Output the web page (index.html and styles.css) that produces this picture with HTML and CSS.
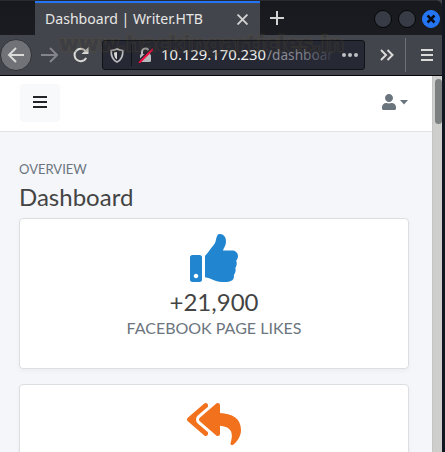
FILE: index.html
```html
<!DOCTYPE html>
<html lang="en">
<head>
<meta charset="utf-8">
<title>Dashboard | Writer.HTB</title>
<link rel="stylesheet" href="styles.css">
</head>
<body>
<div class="window">
  <header class="chrome">
    <div class="tabs">
      <div class="tab"><svg class="tab-label" width="160" height="22"><text x="0" y="15.5" textLength="158" lengthAdjust="spacingAndGlyphs">Dashboard | Writer.HTB</text></svg>
        <svg class="tab-close" width="11" height="11" viewBox="0 0 10 10"><path d="M.5.5l9 9M9.500.5l-9 9"/></svg>
      </div>
      <svg class="new-tab" width="14" height="14" viewBox="0 0 14 14"><path d="M7 0v14M0 7h14"/></svg>
      <div class="controls"><i class="dot"></i><i class="dot"></i><i class="dot close"><svg width="10" height="10" viewBox="0 0 10 10"><path d="M1.500 1.500l7 7M8.500 1.500l-7 7"/></svg></i></div>
    </div>
    <div class="toolbar">
      <span class="back"><svg width="18" height="16" viewBox="0 0 18 16"><path d="M17 8H2M9 1L2 8l7 7"/></svg></span>
      <svg class="forward" width="17" height="16" viewBox="0 0 17 16"><path d="M0 8h15M9 1l7 7-7 7"/></svg>
      <svg class="reload" width="16" height="16" viewBox="0 0 16 16"><path d="M13.2 11A6.2 6.2 0 1 1 12.5 4"/><path class="solid" d="M15.500 0v7H8.500z"/></svg>
      <div class="address">
        <svg class="shield" width="14" height="15" viewBox="0 0 14 15"><path d="M7 1C5 2 3 2.300 1.200 2.500C1 8 2.500 12 7 14C11.500 12 13 8 12.800 2.500C11 2.300 9 2 7 1z"/><path class="solid" d="M7 4L4 4.500C4 8 5 10.500 7 11.500z"/></svg>
        <span class="separator"></span>
        <svg class="lock" width="15" height="16" viewBox="0 0 15 16"><path class="shackle" d="M4 7V5a3.500 3.500 0 0 1 7 0v2"/><rect x="2" y="7" width="11" height="8" rx="1.500"/><path class="gap" d="M0 15L14 1"/><path class="slash" d="M1 16L15 2"/></svg>
        <svg class="url" width="173" height="24"><defs><linearGradient id="fade"><stop offset="0" stop-color="#92939b"/><stop offset=".5" stop-color="#858690"/><stop offset="1" stop-color="#333541"/></linearGradient></defs><text x="0" y="17" textLength="105" lengthAdjust="spacingAndGlyphs">10.129.170.230</text><text class="path" x="106" y="17" textLength="66" lengthAdjust="spacingAndGlyphs">/dashboar</text></svg>
        <span class="more"><i></i><i></i><i></i></span>
      </div>
      <svg class="overflow" width="14" height="12" viewBox="0 0 14 12"><path d="M1 1l5 5-5 5M7.500 1l5 5-5 5"/></svg>
      <span class="tool-line"></span>
      <svg class="menu" width="12" height="12" viewBox="0 0 12 12"><path d="M0 1h12M0 6h12M0 11h12"/></svg>
    </div>
    <svg class="watermark" width="290" height="28"><text x="1" y="20" textLength="285" lengthAdjust="spacingAndGlyphs">www.hackingarticles.in</text></svg>
  </header>
  <div class="viewport">
    <main class="page">
      <nav class="navbar">
        <button class="toggle" aria-label="Menu"><svg width="14" height="14" viewBox="0 0 14 14"><path d="M0 2h14M0 7h14M0 12h14"/></svg></button>
        <div class="user"><svg width="14" height="16" viewBox="0 0 448 512"><path d="M224 256c70.700 0 128-57.300 128-128S294.700 0 224 0 96 57.300 96 128s57.300 128 128 128zm89.600 32h-16.700c-22.200 10.200-46.900 16-72.900 16s-50.600-5.800-72.900-16h-16.700C60.200 288 0 348.200 0 422.400V464c0 26.500 21.500 48 48 48h352c26.500 0 48-21.500 48-48v-41.600c0-74.200-60.200-134.400-134.400-134.400z"/></svg><svg width="8" height="5" viewBox="0 0 8 5"><path d="M0 0h8L4 4.500z"/></svg></div>
      </nav>
      <section class="content">
        <div class="overview">OVERVIEW</div>
        <h1>Dashboard</h1>
        <article class="card">
          <svg class="thumb" width="48" height="48" viewBox="0 0 512 512"><path d="M104 224H24c-13.255 0-24 10.745-24 24v240c0 13.255 10.745 24 24 24h80c13.255 0 24-10.745 24-24V248c0-13.255-10.745-24-24-24zM64 472c-13.255 0-24-10.745-24-24s10.745-24 24-24 24 10.745 24 24-10.745 24-24 24zM384 81.452c0 42.416-25.970 66.208-33.277 94.548h101.723c33.397 0 59.397 27.746 59.553 58.098.084 17.938-7.546 37.249-19.439 49.197l-.110.110c9.836 23.337 8.237 56.037-9.308 79.469 8.681 25.895-.069 57.704-16.382 74.757 4.298 17.598 2.244 32.575-6.148 44.632C440.202 511.587 389.616 512 346.839 512l-2.845-.001c-48.287-.017-87.806-17.598-119.560-31.725-15.957-7.099-36.821-15.887-52.651-16.178-6.540-.120-11.783-5.457-11.783-11.998v-213.770c0-3.200 1.282-6.271 3.558-8.521 39.614-39.144 56.648-80.587 89.117-113.111 14.804-14.832 20.188-37.236 25.393-58.902C282.515 39.293 291.817 0 312 0c24 0 72 8 72 81.452z"/></svg>
          <div class="number">+21,900</div>
          <div class="caption">FACEBOOK PAGE LIKES</div>
        </article>
        <article class="card">
          <svg class="reply" width="54" height="48" viewBox="0 0 576 512"><path d="M136.309 189.836L312.313 37.851C327.720 24.546 352 35.348 352 56.015v82.763c129.182 10.231 224 52.212 224 183.548 0 61.441-39.582 122.309-83.333 154.132-13.653 9.931-33.111-2.533-28.077-18.631 38.512-123.162-3.922-169.482-112.590-182.015v84.175c0 20.701-24.300 31.453-39.687 18.164L136.309 226.164c-11.071-9.561-11.086-26.753 0-36.328zm-128 36.328L184.313 378.150C199.700 391.439 224 380.687 224 359.986v-15.818l-108.606-93.785A55.960 55.960 0 0 1 96 207.998a55.953 55.953 0 0 1 19.393-42.380L224 71.832V56.015c0-20.667-24.280-31.469-39.687-18.164L8.309 189.836c-11.086 9.575-11.071 26.767 0 36.328z"/></svg>
        </article>
      </section>
    </main>
    <div class="scrollbar"><div class="thumb-bar"></div></div>
  </div>
</div>
</body>
</html>
```
FILE: styles.css
```css
* { box-sizing: border-box; }
body { margin: 0; overflow: hidden; background: #101720; font-family: Lato, sans-serif; }
svg { display: block; flex: none; }
.window { width: 445px; height: 452px; display: flex; flex-direction: column; border-right: 3px solid #101720; }
.chrome { position: relative; height: 76px; flex: none; background: #43454c; border-bottom: 1px solid #060509; }
.tabs { height: 35px; display: flex; align-items: center; background: linear-gradient(#17191d, #1a1c21); border-top: 1px solid #292b31; border-top-right-radius: 6px; }
.tab { width: 225px; height: 34px; margin-left: 35px; padding: 0 12px 0 10px; display: flex; align-items: center; justify-content: space-between; background: #43454c; border-top: 2px solid #2375f5; flex: none; }
.tab-label { font: 14px "Noto Sans", sans-serif; fill: #e7e7e5; }
.tab-close, .new-tab { fill: none; stroke: #d3d3d3; stroke-width: 1.700; }
.new-tab { margin-left: 10px; stroke-width: 2; }
.controls { display: flex; gap: 6px; margin-left: auto; margin-right: 2px; padding-top: 2px; }
.dot { width: 18px; height: 18px; border: 1px solid #050608; border-radius: 50%; background: #373b45; display: grid; place-items: center; }
.close { background: #2576f5; border-color: #2576f5; }
.close svg { stroke: #080d17; stroke-width: 2.500; }
.toolbar { height: 40px; display: flex; align-items: center; }
.back { width: 32px; height: 32px; border: 1px solid #313237; border-radius: 50%; background: #717278; display: grid; place-items: center; flex: none; }
.toolbar svg { fill: none; stroke: #dadad8; stroke-width: 2; }
.toolbar .forward { margin-left: 9px; stroke: #83858a; }
.toolbar .reload { margin-left: 15px; }
.toolbar .solid { fill: #dadad8; stroke: none; }
.address { width: 263px; height: 30px; flex: none; margin-left: 13px; padding-left: 7px; border: 1px solid #101217; border-radius: 3px; background: #262833; display: flex; align-items: center; }
.toolbar .shield { stroke: #bcbdc0; stroke-width: 1.700; }
.separator { width: 1px; height: 22px; margin-left: 7px; background: #101217; }
.toolbar .lock { margin-left: 6px; stroke: none; fill: #b8b9bc; }
.toolbar .lock .shackle { stroke: #b8b9bc; fill: none; }
.lock .gap { stroke: #262833; stroke-width: 2; }
.lock .slash { stroke: #f40b42; stroke-width: 2; }
.toolbar .url { margin-left: 8px; stroke: none; fill: #f0f0ee; font: 15px "Noto Sans", sans-serif; }
.url .path { fill: url(#fade); }
.more { display: flex; gap: 2px; margin-left: 8px; }
.more i { width: 4px; height: 4px; border-radius: 50%; background: #bfc0c3; }
.toolbar .overflow { margin-left: 15px; }
.tool-line { width: 1px; height: 34px; margin-left: 11px; background: #707176; }
.toolbar .menu { margin-left: 15px; }
.watermark { position: absolute; left: 58px; top: 31px; font: bold 22px "DejaVu Sans", sans-serif; fill: #2c2a29; stroke: #5e502a; stroke-width: 2.500; paint-order: stroke; opacity: .24; }
.viewport { flex: 1; display: flex; min-height: 0; }
.page { width: 432px; background: #f4f6fa; overflow: hidden; }
.scrollbar { width: 10px; background: #cececd; border-left: 1px solid #c4c4c4; padding-top: 3px; }
.thumb-bar { width: 7px; height: 45px; margin-left: 2px; border-radius: 4px; background: #7c8080; }
.navbar { height: 56px; display: flex; align-items: flex-start; justify-content: space-between; padding: 8px 24px 0 20px; background: #fff; border-bottom: 1px solid #e1e3e6; }
.toggle { width: 40px; height: 38px; padding: 0; border: 0; border-radius: 4px; background: #f8f9fa; display: grid; place-items: center; }
.toggle svg { stroke: #212429; stroke-width: 2; margin-top: -2px; }
.user { display: flex; align-items: center; gap: 4px; fill: #6a747d; padding-top: 10px; }
.content { padding: 28px 23px 0 19px; }
.overview { font-size: 13px; line-height: 18px; color: #6c757d; }
h1 { margin: 0; font-size: 24px; line-height: 29px; font-weight: 400; color: #444; padding-top: 4px; height: 40px; }
.card { height: 151px; margin-bottom: 15px; padding-top: 15px; display: flex; flex-direction: column; align-items: center; background: #fff; border: 1px solid #dcdfe1; border-radius: 4px; box-shadow: 0 2px 4px rgba(0,0,0,.04); }
.thumb { fill: #2185d0; }
.reply { fill: #f2711c; }
.number { margin-top: 5px; font-size: 24px; line-height: 29px; color: #444; }
.caption { font-size: 16px; line-height: 24px; color: #6c757d; }
```
